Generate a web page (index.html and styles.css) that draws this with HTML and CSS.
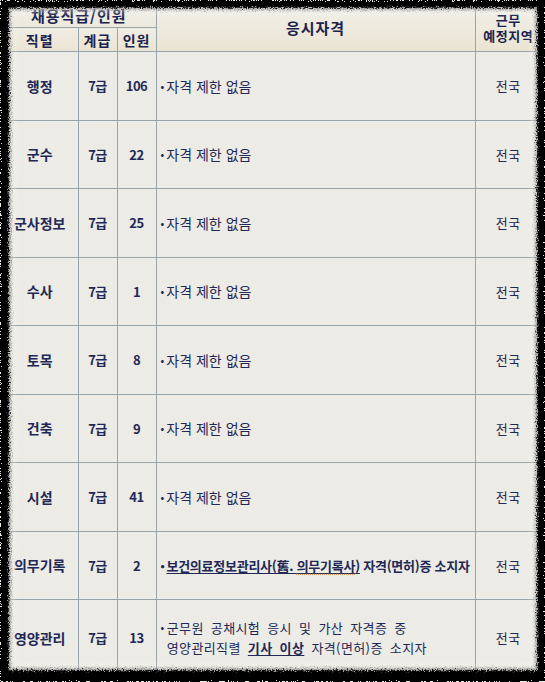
FILE: index.html
```html
<!DOCTYPE html>
<html lang="ko">
<head>
<meta charset="utf-8">
<title>채용직급</title>
<link rel="stylesheet" href="styles.css">
</head>
<body>
<svg class="defs" width="0" height="0" aria-hidden="true">
  <filter id="rough" x="-5%" y="-5%" width="110%" height="110%">
    <feTurbulence type="fractalNoise" baseFrequency="0.8" numOctaves="2" seed="3" result="n"/>
    <feDisplacementMap in="SourceGraphic" in2="n" scale="7" xChannelSelector="R" yChannelSelector="G"/>
  </filter>
</svg>
<div class="paper">
  <table class="grid">
    <colgroup>
      <col class="c1"><col class="c2"><col class="c3"><col class="c4"><col class="c5">
    </colgroup>
    <thead>
      <tr class="h1">
        <th colspan="3" class="wide">채용직급/인원</th>
        <th rowspan="2" class="qual">응시자격</th>
        <th rowspan="2" class="area"><span class="al">근무</span><span class="al">예정지역</span></th>
      </tr>
      <tr class="h2">
        <th>직렬</th><th>계급</th><th>인원</th>
      </tr>
    </thead>
    <tbody>
      <tr><td class="job">행정</td><td class="b">7급</td><td class="b">106</td><td class="q"><span class="dot">•</span>자격 제한 없음</td><td class="loc">전국</td></tr>
      <tr><td class="job">군수</td><td class="b">7급</td><td class="b">22</td><td class="q"><span class="dot">•</span>자격 제한 없음</td><td class="loc">전국</td></tr>
      <tr><td class="job">군사정보</td><td class="b">7급</td><td class="b">25</td><td class="q"><span class="dot">•</span>자격 제한 없음</td><td class="loc">전국</td></tr>
      <tr><td class="job">수사</td><td class="b">7급</td><td class="b">1</td><td class="q"><span class="dot">•</span>자격 제한 없음</td><td class="loc">전국</td></tr>
      <tr><td class="job">토목</td><td class="b">7급</td><td class="b">8</td><td class="q"><span class="dot">•</span>자격 제한 없음</td><td class="loc">전국</td></tr>
      <tr><td class="job">건축</td><td class="b">7급</td><td class="b">9</td><td class="q"><span class="dot">•</span>자격 제한 없음</td><td class="loc">전국</td></tr>
      <tr><td class="job">시설</td><td class="b">7급</td><td class="b">41</td><td class="q"><span class="dot">•</span>자격 제한 없음</td><td class="loc">전국</td></tr>
      <tr><td class="job">의무기록</td><td class="b">7급</td><td class="b">2</td><td class="q strong"><span class="dot">•</span><span class="ul">보건의료정보관리사(舊. <span class="spell">의무기록사</span>)</span> 자격(면허)증 소지자</td><td class="loc">전국</td></tr>
      <tr class="last"><td class="job">영양관리</td><td class="b">7급</td><td class="b">13</td><td class="q multi"><span class="dot">•</span><span class="lines">군무원 공채시험 응시 및 가산 자격증 중<br>영양관리직렬 <strong class="ul">기사 이상</strong> 자격(면허)증 소지자</span></td><td class="loc">전국</td></tr>
    </tbody>
  </table>
</div>
<div class="frame"></div>
</body>
</html>
```
FILE: styles.css
```css
html, body {
  margin: 0;
  padding: 0;
  background: #000;
}
body {
  width: 545px;
  height: 682px;
  overflow: hidden;
  position: relative;
  font-family: "Noto Sans CJK KR", "Noto Sans", sans-serif;
  color: #222856;
}
.defs { position: absolute; }
.paper {
  width: 545px;
  height: 682px;
  background: #ecebe5;
  padding-top: 3px;
  padding-left: 2px;
  box-sizing: border-box;
}
.grid {
  border-collapse: collapse;
  table-layout: fixed;
  width: 539px;
}
.c1 { width: 76px; }
.c2 { width: 39px; }
.c3 { width: 39px; }
.c4 { width: 319px; }
.c5 { width: 66px; }
.grid th, .grid td {
  border: 1px solid #97a6ac;
  padding: 0;
  text-align: center;
  vertical-align: middle;
}
.grid th:first-child, .grid td:first-child { border-left: none; }
.grid th:last-child, .grid td:last-child { border-right: none; }
thead th {
  font-weight: 700;
  font-size: 14px;
  color: #1b224e;
  background: linear-gradient(#f0efe9, #ebe4d2);
  line-height: 14px;
  letter-spacing: 1px;
}
.h1 th { height: 23px; }
.h2 th { height: 23px; }
.wide { font-size: 15px; background: linear-gradient(#f0efe9, #ece8dc); }
.h2 th { background: linear-gradient(#efece3, #ebe4d2); }
.qual { font-size: 15px; }
.area { letter-spacing: 0.5px; font-size: 13px; }
.al { display: block; line-height: 16px; }
tbody tr { height: 68.5px; }
tbody tr.last { height: 76px; }
.job {
  font-weight: 700;
  font-size: 14px;
  letter-spacing: 0;
}
.b {
  font-weight: 700;
  font-size: 13px;
  letter-spacing: -0.5px;
}
.q {
  text-align: left !important;
  font-size: 14px;
  padding-left: 4px !important;
  white-space: nowrap;
}
.dot { font-size: 11px; margin-right: 2px; position: relative; top: -1px; }
.strong { font-weight: 700; font-size: 13px; letter-spacing: -0.25px; }
.ul { text-decoration: underline; text-underline-offset: 2px; }
.spell { text-decoration: underline dotted #e39a5a; text-underline-offset: 3px; }
.multi { font-size: 13px; line-height: 20px; letter-spacing: 0.4px; }
.multi .dot { vertical-align: top; }
.lines { display: inline-block; vertical-align: top; word-spacing: 3px; }
.lines strong { font-weight: 700; }
.loc { font-size: 13px; letter-spacing: 0.5px; }
.frame {
  position: absolute;
  inset: 0;
  pointer-events: none;
  box-sizing: border-box;
  border-style: solid;
  border-color: #000;
  border-width: 7px 7px 11px 8px;
  box-shadow: inset 0 0 1px 1px #2a2a2a, inset 0 0 3px 3px rgba(90,90,90,.55), inset 0 0 6px 5px rgba(255,255,255,.45);
  filter: url(#rough);
}
```
